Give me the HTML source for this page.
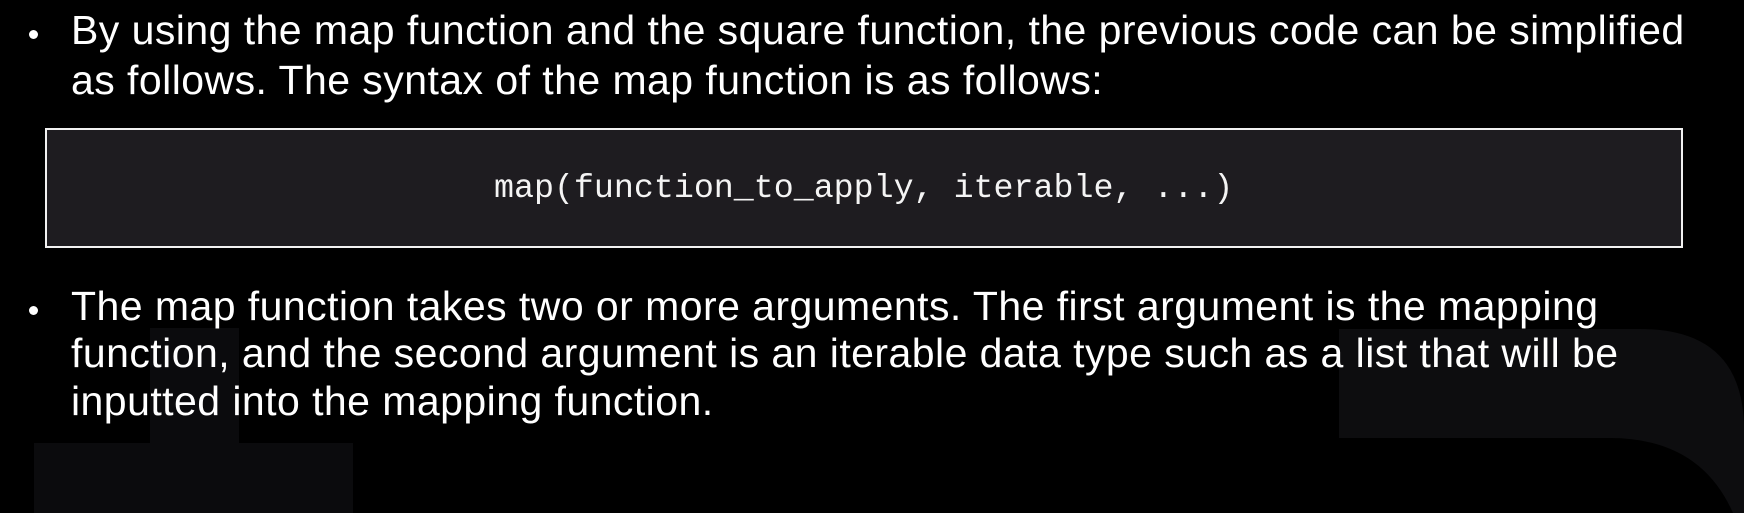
<!DOCTYPE html>
<html><head><meta charset="utf-8"><style>
html,body{margin:0;padding:0;background:#000;}
body{width:1744px;height:513px;position:relative;overflow:hidden;font-family:"Liberation Sans",sans-serif;color:#fff;}
.l{position:absolute;left:71px;font-size:41px;letter-spacing:0.45px;white-space:nowrap;line-height:1;}
.dot{position:absolute;left:29px;width:9px;height:9px;border-radius:50%;background:#fff;}
.code{position:absolute;left:45px;top:128px;width:1634px;height:116px;border:2px solid #f2f2f2;background:#1e1c20;}
.ct{position:absolute;left:494px;top:172px;font-family:"Liberation Mono",monospace;font-size:33.3px;white-space:nowrap;line-height:1;color:#f4f4f4;}
</style></head><body>
<svg width="1744" height="513" style="position:absolute;left:0;top:0">
<path d="M34 443 H150 V328 H239 V443 H353 V513 H34 Z" fill="#0b0b0d"/>
<path d="M1339 329 H1640 Q1744 329 1744 430 V513 H1733 Q1700 438 1610 438 H1339 Z" fill="#0d0d0f"/>
</svg>
<div class="dot" style="top:30px"></div>
<div class="l" style="top:10px">By using the map function and the square function, the previous code can be simplified</div>
<div class="l" style="top:60px">as follows. The syntax of the map function is as follows:</div>
<div class="code"></div>
<div class="ct">map(function_to_apply, iterable, ...)</div>
<div class="dot" style="top:306px"></div>
<div class="l" style="top:286px">The map function takes two or more arguments. The first argument is the mapping</div>
<div class="l" style="top:333px">function, and the second argument is an iterable data type such as a list that will be</div>
<div class="l" style="top:381px">inputted into the mapping function.</div>
</body></html>
